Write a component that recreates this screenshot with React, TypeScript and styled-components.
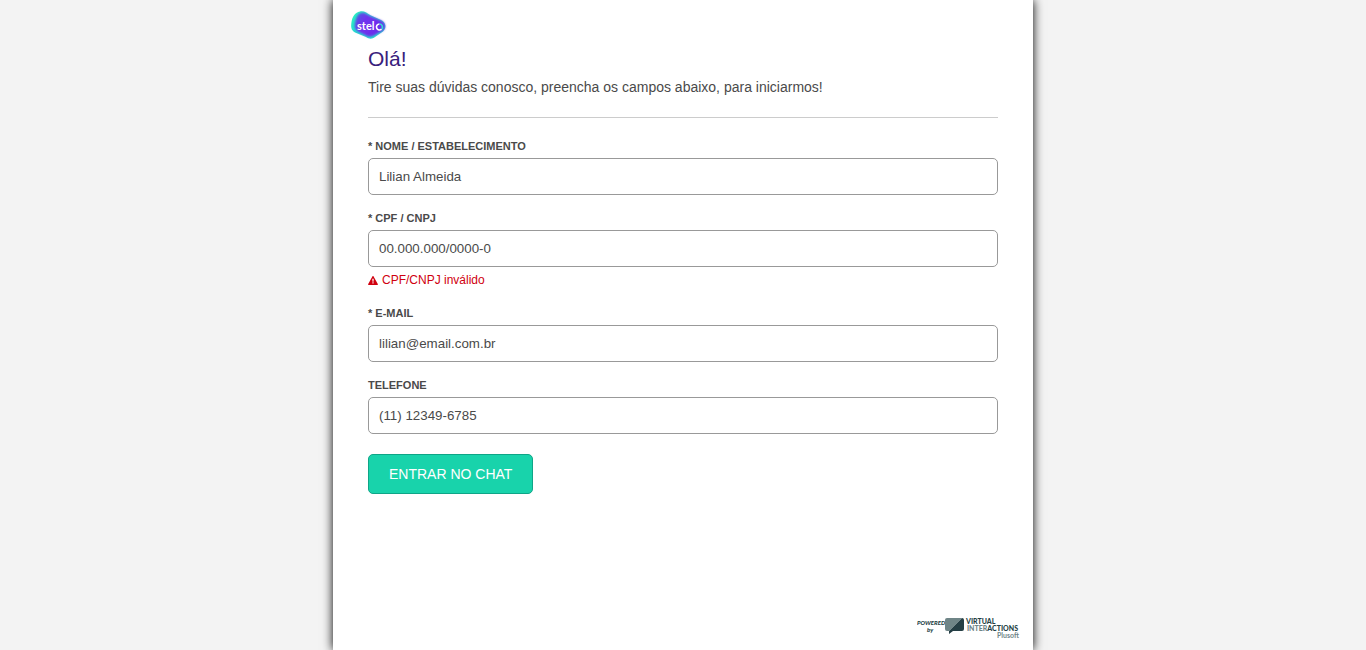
import React, { useState } from 'react';
import styled, { createGlobalStyle } from 'styled-components';

const GlobalStyle = createGlobalStyle`
  *, *::before, *::after { box-sizing: border-box; }
  body {
    margin: 0;
    background: #f3f3f3;
    color: #4a4a4a;
    font-family: "Liberation Sans", Arial, sans-serif;
  }
`;

const Panel = styled.main`
  display: flex;
  flex-direction: column;
  max-width: 700px;
  min-height: 100vh;
  margin: 0 auto;
  background: #fff;
  box-shadow: 0 0 10px #000;
`;

const Brand = styled.header`
  padding: 10px 17px 0;
  height: 42px;
`;

const Content = styled.div`
  padding: 4px 35px 24px;
`;

const Title = styled.h1`
  margin: 0;
  font-size: 21px;
  line-height: 26px;
  font-weight: 400;
  color: #39207c;
`;

const Intro = styled.p`
  margin: 5px 0 20px;
  font-size: 14px;
  line-height: 20px;
`;

const Form = styled.form`
  padding-top: 20px;
  border-top: 1px solid #ccc;
`;

const Field = styled.div`
  margin-bottom: 15px;
`;

const Label = styled.label`
  display: block;
  margin-bottom: 4px;
  font-size: 11px;
  line-height: 16px;
  font-weight: 700;
  text-transform: uppercase;
`;

const Input = styled.input`
  display: block;
  width: 100%;
  height: 37px;
  padding: 0 10px;
  border: 1px solid #999;
  border-radius: 5px;
  background: #fff;
  color: #4a4a4a;
  font-family: inherit;
`;

const FieldError = styled.p`
  display: flex;
  align-items: center;
  gap: 4px;
  margin: 0;
  padding: 5px 0 2px;
  font-size: 12px;
  line-height: 16px;
  color: #d0000f;
`;

const Submit = styled.button`
  height: 40px;
  margin-top: 5px;
  padding: 0 20px;
  border: 1px solid #0fa587;
  border-radius: 5px;
  background: #18d3ab;
  color: #fff;
  font-family: inherit;
  font-size: 14px;
  text-transform: uppercase;
  cursor: pointer;
`;

const Footer = styled.footer`
  display: flex;
  justify-content: flex-end;
  margin-top: auto;
  padding: 0 12px 11px;
`;

const Drawing = styled.svg`
  display: block;
`;

const SteloLogo = () => (
  <Drawing width="38" height="30" viewBox="0 0 38 30" role="img" aria-label="stelo">
    <defs>
      <linearGradient id="edge" x1="0" y1="0" x2="1" y2="1">
        <stop offset="0" stopColor="#2af5bd" />
        <stop offset="0.45" stopColor="#25dcd0" />
        <stop offset="1" stopColor="#25e4cc" />
      </linearGradient>
      <linearGradient id="body" x1="0" y1="0" x2="1" y2="0.6">
        <stop offset="0" stopColor="#4a62e0" />
        <stop offset="0.4" stopColor="#7131ee" />
        <stop offset="1" stopColor="#6a2eea" />
      </linearGradient>
      <filter id="soft" x="-20%" y="-20%" width="140%" height="140%">
        <feGaussianBlur stdDeviation="0.9" />
      </filter>
    </defs>
    <path
      d="M10 1.400C14 .6 17 3 21 5.500L31 10C36 12.500 37 18 33 21.500L25 27C22 29.500 19 29 16 27L5 22.500C.5 20 1 16 1.500 12C2.500 6 5 2.500 10 1.400Z"
      fill="url(#edge)"
    />
    <path
      d="M11 3C15 2 17 4.500 20 6L31 10.500C36 13 36 18 33 20.500L24 25.500C20 27.500 18 26.500 15 25L8 21.500C4 19 4.500 15 5.500 11C6.500 7 8 3.500 11 3Z"
      fill="url(#body)"
      filter="url(#soft)"
    />
    <text x="7" y="20" fill="#fff" fontFamily="Lato, sans-serif" fontWeight="700" fontSize="11">
      stel
    </text>
    <path d="M29.500 14A3 3 0 1 0 31.600 19.100" fill="none" stroke="#fff" strokeWidth="1.600" />
    <path d="M29.500 14A3 3 0 0 1 31.600 19.100" fill="none" stroke="#2fe0cf" strokeWidth="1.600" />
  </Drawing>
);

const WarningIcon = () => (
  <Drawing width="10" height="9" viewBox="0 0 10 9" aria-hidden="true">
    <path d="M5 0c.3 0 .5.200.6.400l4.200 7.600c.2.500 0 1-.5 1H.7c-.5 0-.7-.5-.5-1L4.400.400C4.500.200 4.700 0 5 0Z" fill="#d0000f" />
    <path d="M4.300 2.800h1.400l-.2 2.900h-1ZM4.400 6.300h1.200v1.200H4.400Z" fill="#fff" />
  </Drawing>
);

const VendorLogo = () => (
  <Drawing
    width="104"
    height="24"
    viewBox="0 0 104 24"
    role="img"
    aria-label="Powered by Virtual Interactions Plusoft"
    fontFamily="Lato, sans-serif"
    fontWeight="900"
  >
    <g fontSize="6" fontStyle="italic" fill="#253f45">
      <text x="0" y="10">POWERED</text>
      <text x="10" y="17">by</text>
    </g>
    <path d="M30 3H45L32 16H30Q28 16 28 14V5Q28 3 30 3Z" fill="#6f8587" />
    <path d="M45 3Q47 3 47 5V14Q47 16 45 16H36L32 19V16Z" fill="#253f45" />
    <g fontSize="7">
      <text x="49" y="9" fill="#253f45">VIRTUAL</text>
      <text x="50" y="16" fill="#6f8587">
        INTER<tspan fill="#253f45">ACTIONS</tspan>
      </text>
      <text x="80" y="23" fontWeight="700" fill="#6f8587">Plusoft</text>
    </g>
  </Drawing>
);

type FieldData = { id: string; label: string; type: string; value: string; error?: string };

const initialFields: FieldData[] = [
  { id: 'nome', label: '* Nome / Estabelecimento', type: 'text', value: 'Lilian Almeida' },
  { id: 'documento', label: '* CPF / CNPJ', type: 'text', value: '00.000.000/0000-0', error: 'CPF/CNPJ inválido' },
  { id: 'email', label: '* E-mail', type: 'email', value: 'lilian@email.com.br' },
  { id: 'telefone', label: 'Telefone', type: 'tel', value: '(11) 12349-6785' },
];

export default function App() {
  const [fields, setFields] = useState(initialFields);

  const update = (id: string, value: string) =>
    setFields(current => current.map(field => (field.id === id ? { ...field, value } : field)));

  return (
    <>
      <GlobalStyle />
      <Panel>
        <Brand>
          <SteloLogo />
        </Brand>
        <Content>
          <Title>Olá!</Title>
          <Intro>Tire suas dúvidas conosco, preencha os campos abaixo, para iniciarmos!</Intro>
          <Form noValidate onSubmit={event => event.preventDefault()}>
            {fields.map(({ id, label, type, value, error }) => (
              <Field key={id}>
                <Label htmlFor={id}>{label}</Label>
                <Input
                  id={id}
                  type={type}
                  value={value}
                  aria-invalid={Boolean(error)}
                  aria-describedby={error ? `${id}-erro` : undefined}
                  onChange={event => update(id, event.target.value)}
                />
                {error && (
                  <FieldError id={`${id}-erro`}>
                    <WarningIcon />
                    {error}
                  </FieldError>
                )}
              </Field>
            ))}
            <Submit type="submit">Entrar no chat</Submit>
          </Form>
        </Content>
        <Footer>
          <VendorLogo />
        </Footer>
      </Panel>
    </>
  );
}
